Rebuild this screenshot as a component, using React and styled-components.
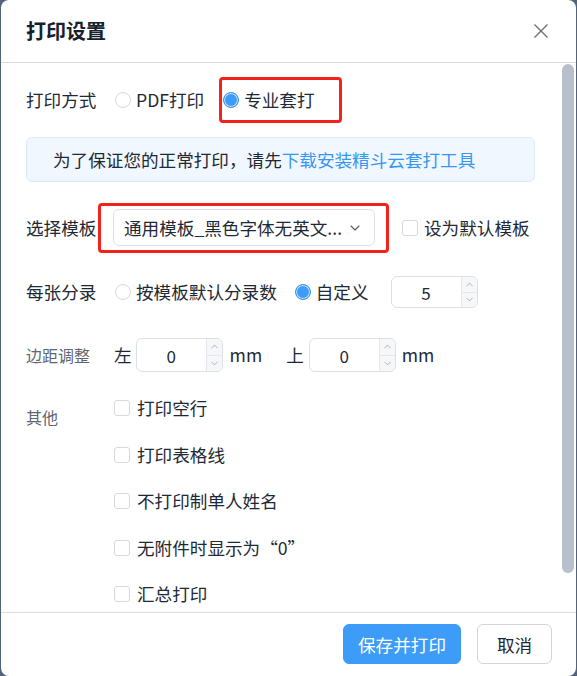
import React from 'react';
import styled, { createGlobalStyle } from 'styled-components';
import { ChevronDown, ChevronUp } from 'lucide-react';

const GlobalStyle = createGlobalStyle`
  html, body {
    margin: 0;
    padding: 0;
    background: #53637a;
  }
  * { box-sizing: border-box; }
`;

const Page = styled.div`
  width: 577px;
  height: 676px;
  padding: 0 1px 0 1px;
  font-family: "Noto Sans CJK SC", "Noto Sans", sans-serif;
  color: #1d2935;
`;

const Dialog = styled.div`
  height: 676px;
  background: #fff;
  border-radius: 8px;
  display: flex;
  flex-direction: column;
  overflow: hidden;
`;

const Header = styled.div`
  height: 63px;
  flex: none;
  display: flex;
  align-items: center;
  justify-content: space-between;
  padding: 0 28px 1px 25px;
  border-bottom: 1px solid #dcdcdc;
`;

const Title = styled.h1`
  margin: 0;
  font-size: 20px;
  font-weight: 700;
  color: #16212c;
  line-height: 1;
`;

const CloseButton = styled.button`
  border: 0;
  background: none;
  padding: 0;
  width: 14px;
  height: 14px;
  display: flex;
  cursor: pointer;
`;

const Body = styled.div`
  flex: 1;
  min-height: 0;
  display: flex;
`;

const Content = styled.div`
  flex: 1;
  min-width: 0;
  overflow: hidden;
  padding: 0 27px 38px 25px;
`;

const ScrollTrack = styled.div`
  width: 14px;
  flex: none;
  padding-top: 1px;
`;

const ScrollThumb = styled.div`
  width: 12px;
  height: 509px;
  border-radius: 6px;
  background: #b8c0cb;
`;

const Row = styled.div`
  display: flex;
  align-items: center;
  height: ${p => p.$h}px;
  margin-top: ${p => p.$mt}px;
  font-size: 17.6px;
`;

const Label = styled.div`
  width: ${p => p.$w || 89}px;
  flex: none;
  font-size: ${p => (p.$small ? '16px' : '17.6px')};
  color: ${p => (p.$small ? '#5f6670' : '#1d2935')};
  line-height: 24px;
  align-self: ${p => (p.$top ? 'flex-start' : 'auto')};
  padding-top: ${p => (p.$top ? '20px' : '0')};
`;

const Option = styled.label`
  display: inline-flex;
  align-items: center;
  gap: ${p => p.$gap || 5}px;
  margin-left: ${p => p.$ml || 0}px;
  line-height: 24px;
  white-space: nowrap;
`;

const RadioDot = styled.span`
  width: 16px;
  height: 16px;
  flex: none;
  border-radius: 50%;
  border: 1px solid ${p => (p.$on ? '#3b93ee' : '#d9d9d9')};
  background: ${p => (p.$on ? '#3d9cf7' : '#fff')};
  box-shadow: ${p => (p.$on ? 'inset 0 0 0 1px #cfe5fd' : 'none')};
`;

const Box = styled.span`
  width: 16px;
  height: 16px;
  flex: none;
  border-radius: 3px;
  border: 1px solid #d9d9d9;
  background: #fff;
`;

const Marked = styled.span`
  position: relative;
  display: inline-flex;
  margin-left: ${p => p.$ml || 0}px;

  &::after {
    content: '';
    position: absolute;
    top: ${p => p.$t}px;
    right: ${p => p.$r}px;
    bottom: ${p => p.$b}px;
    left: ${p => p.$l}px;
    border: 3px solid #f3231c;
    border-radius: 4px;
    pointer-events: none;
  }
`;

const Notice = styled.div`
  margin-top: 14px;
  height: 45px;
  display: flex;
  align-items: center;
  padding-left: 26px;
  background: #f1f7ff;
  border: 1px solid #dbe9f9;
  border-radius: 6px;
  font-size: 17.6px;
  color: #1d2935;
  white-space: nowrap;
`;

const Link = styled.a`
  color: #3796f2;
  text-decoration: none;
`;

const Select = styled.div`
  width: 262px;
  height: 37px;
  border: 1px solid #dcdfe6;
  border-radius: 6px;
  display: flex;
  align-items: center;
  padding: 0 11px 0 10px;
  gap: 6px;
  font-size: 17.6px;
  color: #1d2935;
`;

const SelectText = styled.span`
  flex: 1;
  min-width: 0;
  white-space: nowrap;
`;

const NumberBox = styled.div`
  width: 87px;
  height: ${p => p.$h}px;
  margin-left: ${p => p.$ml || 0}px;
  border: 1px solid #dcdfe6;
  border-radius: 6px;
  display: flex;
  overflow: hidden;
  flex: none;
`;

const NumberValue = styled.span`
  flex: 1;
  display: flex;
  align-items: center;
  justify-content: center;
  font-size: 17px;
  color: #1d2935;
`;

const Spinner = styled.span`
  width: 16px;
  display: flex;
  flex-direction: column;
  border-left: 1px solid #e4e7ed;
  background: #f6f7f9;
`;

const SpinHalf = styled.span`
  flex: 1;
  display: flex;
  align-items: center;
  justify-content: center;
  color: #8a9099;
  & + & { border-top: 1px solid #e4e7ed; }
`;

const Unit = styled.span`
  margin-left: ${p => p.$ml || 0}px;
  line-height: 24px;
`;

const Others = styled.div`
  display: flex;
  margin-top: 13px;
`;

const CheckList = styled.div`
  display: flex;
  flex-direction: column;
`;

const CheckRow = styled.div`
  height: 46.5px;
  display: flex;
  align-items: center;
  font-size: 17.6px;
`;

const Footer = styled.div`
  flex: none;
  height: 64px;
  border-top: 1px solid #dcdcdc;
  display: flex;
  align-items: center;
  justify-content: flex-end;
  gap: 16px;
  padding: 0 24px 1px 0;
`;

const Button = styled.button`
  height: 40px;
  width: ${p => (p.$primary ? 118 : 75)}px;
  padding: 0;
  border-radius: 6px;
  font-family: inherit;
  font-size: 17.6px;
  cursor: pointer;
  border: 1px solid ${p => (p.$primary ? '#3d9cf8' : '#d4d4d4')};
  background: ${p => (p.$primary ? '#3d9cf8' : '#fff')};
  color: ${p => (p.$primary ? '#fff' : '#1d2935')};
`;

function NumberInput({ value, h, ml }) {
  return (
    <NumberBox $h={h} $ml={ml}>
      <NumberValue>{value}</NumberValue>
      <Spinner>
        <SpinHalf><ChevronUp size={11} strokeWidth={1.5} /></SpinHalf>
        <SpinHalf><ChevronDown size={11} strokeWidth={1.5} /></SpinHalf>
      </Spinner>
    </NumberBox>
  );
}

const extras = ['打印空行', '打印表格线', '不打印制单人姓名', '无附件时显示为“0”', '汇总打印'];

export default function App() {
  return (
    <Page>
      <GlobalStyle />
      <Dialog>
        <Header>
          <Title>打印设置</Title>
          <CloseButton aria-label="关闭">
            <svg width="14" height="14" viewBox="0 0 14 14">
              <path d="M0.5 0.5 L13.5 13.5 M13.5 0.5 L0.5 13.5" stroke="#6b7078" strokeWidth="1.4" />
            </svg>
          </CloseButton>
        </Header>
        <Body>
          <Content>
            <Row $h={46} $mt={14}>
              <Label>打印方式</Label>
              <Option><RadioDot />PDF打印</Option>
              <Marked $ml={19} $t={-11} $r={-27} $b={-11} $l={-4}>
                <Option><RadioDot $on />专业套打</Option>
              </Marked>
            </Row>

            <Notice>
              为了保证您的正常打印，请先<Link href="#">下载安装精斗云套打工具</Link>
            </Notice>

            <Row $h={37} $mt={27}>
              <Label $w={87}>选择模板</Label>
              <Marked $t={-6} $r={-14} $b={-7} $l={-15}>
                <Select>
                  <SelectText>通用模板_黑色字体无英文...</SelectText>
                  <ChevronDown size={16} strokeWidth={1.6} color="#555c66" />
                </Select>
              </Marked>
              <Option $ml={27} $gap={6}><Box />设为默认模板</Option>
            </Row>

            <Row $h={32} $mt={30}>
              <Label>每张分录</Label>
              <Option><RadioDot />按模板默认分录数</Option>
              <Option $ml={18}><RadioDot $on />自定义</Option>
              <NumberInput value="5" h={32} ml={22} />
            </Row>

            <Row $h={34} $mt={30}>
              <Label $small $w={88}>边距调整</Label>
              <Unit>左</Unit>
              <NumberInput value="0" h={34} ml={4} />
              <Unit $ml={7}>mm</Unit>
              <Unit $ml={24}>上</Unit>
              <NumberInput value="0" h={34} ml={5} />
              <Unit $ml={6}>mm</Unit>
            </Row>

            <Others>
              <Label $small $top $w={88}>其他</Label>
              <CheckList>
                {extras.map(text => (
                  <CheckRow key={text}>
                    <Option $gap={7}><Box />{text}</Option>
                  </CheckRow>
                ))}
              </CheckList>
            </Others>
          </Content>
          <ScrollTrack>
            <ScrollThumb />
          </ScrollTrack>
        </Body>
        <Footer>
          <Button $primary>保存并打印</Button>
          <Button>取消</Button>
        </Footer>
      </Dialog>
    </Page>
  );
}
